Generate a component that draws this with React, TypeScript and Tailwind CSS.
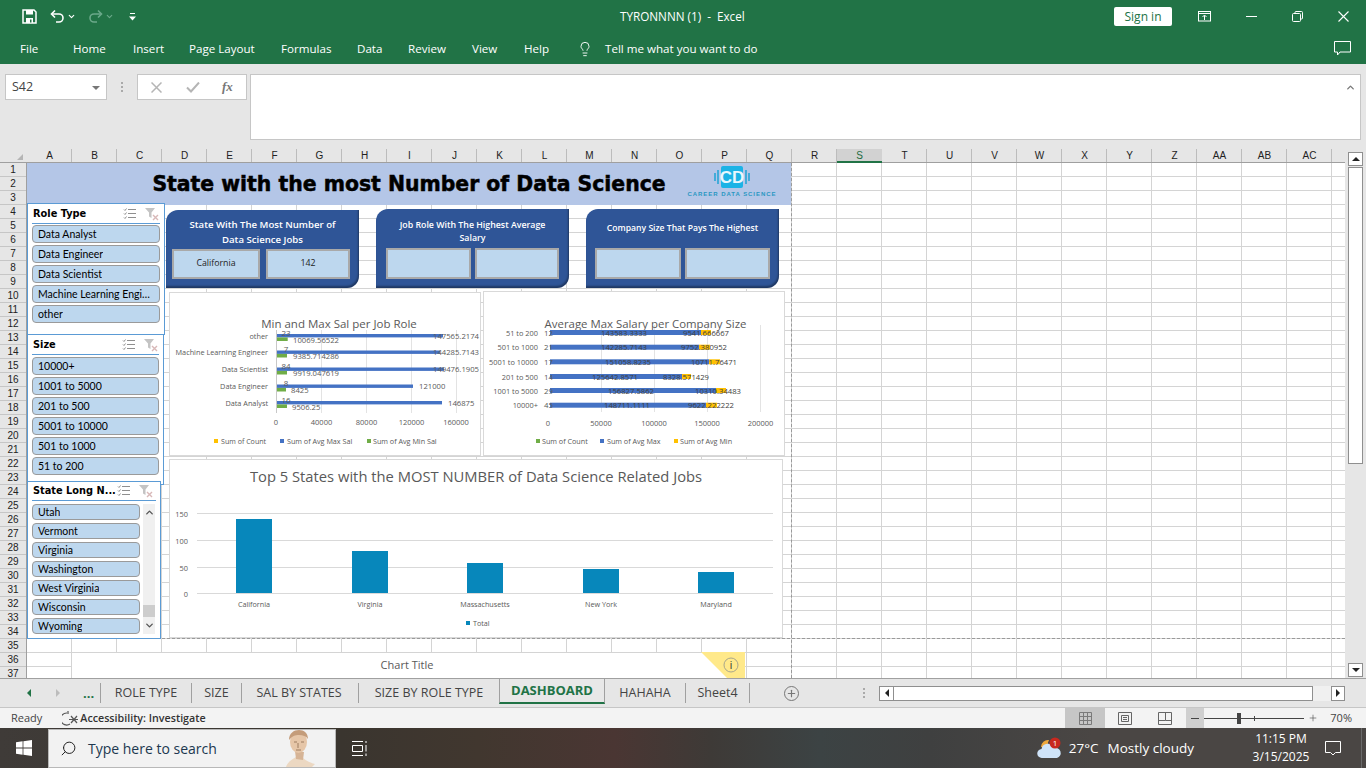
import type { ReactNode } from 'react';
import { ChevronDown, ChevronUp, Lightbulb, Plus, Search } from 'lucide-react';

const COLS = ['A','B','C','D','E','F','G','H','I','J','K','L','M','N','O','P','Q','R','S','T','U','V','W','X','Y','Z','AA','AB','AC'];
const ROWS = Array.from({ length: 37 }, (_, i) => i + 1);
const TABS = [
  { name: 'File', w: 'w-[53px]' },
  { name: 'Home', w: 'w-[60px]' },
  { name: 'Insert', w: 'w-[56px]' },
  { name: 'Page Layout', w: 'w-[92px]' },
  { name: 'Formulas', w: 'w-[76px]' },
  { name: 'Data', w: 'w-[51px]' },
  { name: 'Review', w: 'w-[64px]' },
  { name: 'View', w: 'w-[52px]' },
  { name: 'Help', w: 'w-[52px]' },
];

function Label({ x, y, a = 'start', s = 8, c = '#595959', children }: { x: number; y: number; a?: 'start' | 'middle' | 'end'; s?: number; c?: string; children: ReactNode }) {
  return (
    <text x={x} y={y} textAnchor={a} dominantBaseline="central" fontSize={s} fill={c}>
      {children}
    </text>
  );
}

function RoleChart() {
  const groups = [
    { name: 'other', y: 334, count: '23', max: 166, min: 10.7, maxL: '147565.2174', minL: '10069.56522', maxX: 433, minX: 293 },
    { name: 'Machine Learning Engineer', y: 350.5, count: '7', max: 163, min: 10, maxL: '144285.7143', minL: '9385.714286', maxX: 433, minX: 293 },
    { name: 'Data Scientist', y: 367.5, count: '84', max: 167, min: 10, maxL: '149476.1905', minL: '9919.047619', maxX: 433, minX: 293 },
    { name: 'Data Engineer', y: 384.5, count: '8', max: 136, min: 9, maxL: '121000', minL: '8425', maxX: 419, minX: 291 },
    { name: 'Data Analyst', y: 401, count: '16', max: 165, min: 10, maxL: '146875', minL: '9506.25', maxX: 448, minX: 292 },
  ];
  return (
    <svg viewBox="170 293 310 162" className="h-full w-full">
      {[321.5, 366.5, 411.5, 456.5].map((x) => (
        <line key={x} x1={x} x2={x} y1={330} y2={413} stroke="#e3e3e3" />
      ))}
      <line x1={276.5} x2={276.5} y1={330} y2={413} stroke="#c8c8c8" />
      <Label x={339} y={323} a="middle" s={11.5}>Min and Max Sal per Job Role</Label>
      {groups.map((g) => (
        <g key={g.name}>
          <rect x={277} y={g.y} width={g.max} height={3.4} fill="#4472c4" />
          <rect x={277} y={g.y + 3.4} width={g.min} height={3.6} fill="#70ad47" />
          <Label x={268} y={g.y + 1.5} a="end" s={7.3}>{g.name}</Label>
          <Label x={286} y={g.y - 2} a="middle" s={8}>{g.count}</Label>
          <Label x={g.maxX} y={g.y + 1.5} s={7.7}>{g.maxL}</Label>
          <Label x={g.minX} y={g.y + 5.5} s={7.7}>{g.minL}</Label>
        </g>
      ))}
      {[['0', 276], ['40000', 321.5], ['80000', 366.5], ['120000', 411.5], ['160000', 456]].map(([t, x]) => (
        <Label key={t} x={x as number} y={422} a="middle" s={7.5}>{t}</Label>
      ))}
      <rect x={214} y={439} width={4} height={4} fill="#ffc000" />
      <Label x={221} y={441} s={7.1}>Sum of Count</Label>
      <rect x={280} y={439} width={4} height={4} fill="#4472c4" />
      <Label x={287} y={441} s={7.2}>Sum of Avg Max Sal</Label>
      <rect x={367} y={439} width={4} height={4} fill="#70ad47" />
      <Label x={373} y={441} s={7.2}>Sum of Avg Min Sal</Label>
    </svg>
  );
}

function SizeChart() {
  const groups = [
    { name: '51 to 200', y: 330, count: '12', blue: 701, orange: 711, maxL: '143583.3333', maxX: 624, minL: '9541.666667', minX: 706 },
    { name: '501 to 1000', y: 344.7, count: '21', blue: 699, orange: 710, maxL: '142285.7143', maxX: 624, minL: '9752.380952', minX: 704 },
    { name: '5001 to 10000', y: 359.3, count: '17', blue: 709, orange: 720, maxL: '151058.8235', maxX: 628, minL: '10711.76471', minX: 714 },
    { name: '201 to 500', y: 374, count: '14', blue: 682, orange: 691, maxL: '125642.8571', maxX: 615, minL: '8328.571429', minX: 686 },
    { name: '1001 to 5000', y: 388, count: '29', blue: 716, orange: 726, maxL: '156827.5862', maxX: 631, minL: '10310.34483', minX: 718 },
    { name: '10000+', y: 402.7, count: '45', blue: 706, orange: 717, maxL: '148711.1111', maxX: 627, minL: '9622.222222', minX: 711 },
  ];
  return (
    <svg viewBox="484 292 300 163" className="h-full w-full">
      {[601.5, 654.5, 707.5, 760.5].map((x) => (
        <line key={x} x1={x} x2={x} y1={325} y2={412} stroke="#e3e3e3" />
      ))}
      <Label x={645.5} y={323.5} a="middle" s={11.4}>Average Max Salary per Company Size</Label>
      {groups.map((g) => (
        <g key={g.name}>
          <rect x={550} y={g.y} width={g.blue - 550} height={5} fill="#4472c4" />
          <rect x={g.blue} y={g.y} width={g.orange - g.blue} height={5} fill="#ffc000" />
          <Label x={538} y={g.y + 2.5} a="end" s={7.4}>{g.name}</Label>
          <Label x={544} y={g.y + 2.5} s={7.8}>{g.count}</Label>
          <Label x={g.maxX} y={g.y + 2.5} a="middle" s={7.7} c="#404040">{g.maxL}</Label>
          <Label x={g.minX} y={g.y + 2.5} a="middle" s={7.7} c="#404040">{g.minL}</Label>
        </g>
      ))}
      {[['0', 548], ['50000', 601], ['100000', 654], ['150000', 707], ['200000', 760.5]].map(([t, x]) => (
        <Label key={t} x={x as number} y={423} a="middle" s={7.5}>{t}</Label>
      ))}
      <rect x={536} y={439} width={4} height={4} fill="#70ad47" />
      <Label x={542} y={441} s={7.2}>Sum of Count</Label>
      <rect x={600} y={439} width={4} height={4} fill="#4472c4" />
      <Label x={607} y={441} s={7.2}>Sum of Avg Max</Label>
      <rect x={674} y={439} width={4} height={4} fill="#ffc000" />
      <Label x={680} y={441} s={7.2}>Sum of Avg Min</Label>
    </svg>
  );
}

function StatesChart() {
  const bars = [
    { name: 'California', x: 236, top: 519 },
    { name: 'Virginia', x: 352, top: 551 },
    { name: 'Massachusetts', x: 467, top: 563 },
    { name: 'New York', x: 583, top: 569 },
    { name: 'Maryland', x: 698, top: 572 },
  ];
  return (
    <svg viewBox="170 460 612 177" className="h-full w-full">
      {[[513.5, '150'], [540.5, '100'], [567.5, '50'], [593.5, '0']].map(([y, t]) => (
        <g key={t}>
          <line x1={197} x2={773} y1={y} y2={y} stroke="#d9d9d9" />
          <Label x={188} y={y as number} a="end" s={7.4}>{t}</Label>
        </g>
      ))}
      <Label x={476} y={476} a="middle" s={14.75}>Top 5 States with the MOST NUMBER of Data Science Related Jobs</Label>
      {bars.map((b) => (
        <g key={b.name}>
          <rect x={b.x} y={b.top} width={36} height={593 - b.top} fill="#0787bb" />
          <Label x={b.x + 18} y={604} a="middle" s={7.2}>{b.name}</Label>
        </g>
      ))}
      <rect x={466} y={621} width={4} height={4} fill="#0787bb" />
      <Label x={473} y={623} s={7.2}>Total</Label>
    </svg>
  );
}

function SlicerIcons() {
  return (
    <div className="flex items-center gap-[9px]">
      <svg width="13" height="12" viewBox="0 0 13 12" fill="none" stroke="#8f8f8f">
        <path d="M5 1.5h8M5 5.5h8M5 9.5h8" />
        <path d="M1 1.5l1 1 1.5-2M1 5.5l1 1 1.5-2M1 9.5l1 1 1.5-2" />
      </svg>
      <svg width="14" height="14" viewBox="0 0 14 14">
        <path d="M0 1h10L6.5 5.5V11L4 9.5V5.5z" fill="#c4c4c4" />
        <path d="M8 8l5 5M13 8l-5 5" stroke="#d8b8b8" strokeWidth="1.4" />
      </svg>
    </div>
  );
}

function SlicerBtn({ children, small }: { children: ReactNode; small?: boolean }) {
  return (
    <div className={`flex items-center rounded-[4px] border border-[#9a9a9a] bg-[#bdd7ee] pl-[5px] pr-[6px] pt-px text-[10.5px] text-black ${small ? 'h-[16px]' : 'h-[18px]'}`}>
      <span className="truncate">{children}</span>
    </div>
  );
}

function SlicerTitle({ children }: { children: ReactNode }) {
  return <span className="whitespace-nowrap font-['DejaVu_Sans',sans-serif] text-[9.8px] font-bold text-black">{children}</span>;
}

function Slicer({ title, items, className, listClass }: { title: string; items: string[]; className: string; listClass: string }) {
  return (
    <div className={`absolute flex flex-col border border-[#5b9bd5] bg-white px-[4px] font-['Lato',sans-serif] ${className}`}>
      <div className="flex h-[20px] shrink-0 items-center justify-between border-b border-[#5b9bd5] pl-px pr-[1px] pt-[1px]">
        <SlicerTitle>{title}</SlicerTitle>
        <SlicerIcons />
      </div>
      <div className={`flex flex-col gap-[2px] ${listClass}`}>
        {items.map((i) => (
          <SlicerBtn key={i}>{i}</SlicerBtn>
        ))}
      </div>
    </div>
  );
}

function StateSlicer() {
  const items = ['Utah', 'Vermont', 'Virginia', 'Washington', 'West Virginia', 'Wisconsin', 'Wyoming'];
  return (
    <div className="absolute left-[0px] top-[318px] flex h-[158px] w-[134px] flex-col overflow-hidden border border-[#5b9bd5] bg-white px-[4px] font-['Lato',sans-serif]">
      <div className="flex h-[19px] shrink-0 items-center justify-between border-b border-[#5b9bd5] pl-px pr-[3px]">
        <SlicerTitle>State Long N...</SlicerTitle>
        <SlicerIcons />
      </div>
      <div className="mt-[3px] flex gap-[3px]">
        <div className="flex w-[108px] flex-col gap-[3px]">
          {items.map((i) => (
            <SlicerBtn key={i} small>{i}</SlicerBtn>
          ))}
        </div>
        <div className="flex h-[130px] w-[12px] flex-col items-center justify-between bg-[#f0f0f0]">
          <ChevronUp size={11} strokeWidth={3} className="mt-[3px] text-[#555]" />
          <div className="mt-auto h-[12px] w-full bg-[#cdcdcd]" />
          <ChevronDown size={11} strokeWidth={3} className="my-[3px] text-[#555]" />
        </div>
      </div>
    </div>
  );
}

function InfoCard({ className, titleClass, title, boxes }: { className: string; titleClass: string; title: ReactNode; boxes: { text?: string; w: string }[] }) {
  return (
    <div className={`absolute flex w-[193px] flex-col rounded-tl-[12px] rounded-br-[12px] bg-[#2f5597] pb-[9px] shadow-[inset_-1px_-2px_2px_rgba(0,0,0,0.35)] ${className}`}>
      <div className={`-mx-[6px] flex h-[39px] flex-col items-center justify-center text-center font-semibold text-white ${titleClass}`}>
        {title}
      </div>
      <div className="flex flex-1">
        {boxes.map((b, i) => (
          <div key={i} className={`flex items-center justify-center border-2 border-[#a9a9a9] bg-[#bdd7ee] text-[8.8px] font-medium text-[#222] ${b.w}`}>
            {b.text}
          </div>
        ))}
      </div>
    </div>
  );
}

function Logo() {
  return (
    <div className="absolute left-[660px] top-[2px] flex w-[90px] flex-col items-center font-['Liberation_Sans',sans-serif]">
      <svg width="36" height="24" viewBox="0 0 36 24">
        <rect x="7" y="1" width="22" height="22" rx="2" fill="#1bb3e6" />
        <path d="M1 8v8M4 5v14M32 5v14M35 8v8" stroke="#27a5d6" strokeWidth="1.6" />
        <text x="18" y="18" textAnchor="middle" fontSize="17" fontWeight="700" fill="#e8f7fd">CD</text>
      </svg>
      <span className="mt-[1px] whitespace-nowrap text-[6px] font-bold tracking-[0.95px] text-[#2a97c2]">CAREER DATA SCIENCE</span>
    </div>
  );
}

function Canvas() {
  return (
    <div className="relative h-[515px] flex-1 overflow-hidden bg-white bg-[linear-gradient(to_right,transparent_44px,#d4d4d4_44px),linear-gradient(to_bottom,transparent_13px,#d4d4d4_13px)] bg-[size:45px_14px]">
      {/* page break lines */}
      <div className="absolute left-[764px] top-0 h-full border-l border-dashed border-[#9a9a9a]" />
      <div className="absolute left-0 top-[475px] w-full border-t border-dashed border-[#9a9a9a]" />

      <div className="absolute left-0 top-0 flex h-[42px] w-[764px] items-center justify-center bg-[#b4c6e7] pt-px">
        <span className="whitespace-nowrap font-['DejaVu_Sans',sans-serif] text-[20.4px] font-bold text-black [-webkit-text-stroke:0.5px_black]">State with the most Number of Data Science</span>
        <Logo />
      </div>

      <Slicer title="Role Type" items={['Data Analyst', 'Data Engineer', 'Data Scientist', 'Machine Learning Engineer', 'other']} listClass="mt-[1px]" className="left-0 top-[40px] h-[132px] w-[138px]" />
      <Slicer title="Size" items={['10000+', '1001 to 5000', '201 to 500', '5001 to 10000', '501 to 1000', '51 to 200']} listClass="mt-[2px]" className="left-0 top-[171px] h-[151px] w-[137px]" />
      <StateSlicer />

      <InfoCard
        className="left-[139px] top-[47px] h-[78px] px-[6px]"
        titleClass="pt-[5px] text-[9.6px] leading-[15px]"
        title={<><span>State With The Most Number of</span><span>Data Science Jobs</span></>}
        boxes={[{ text: 'California', w: 'w-[88px]' }, { text: '142', w: 'ml-[6px] w-[84px]' }]}
      />
      <InfoCard
        className="left-[349px] top-[46px] h-[79px] px-[10px]"
        titleClass="pt-[6px] text-[8.8px] leading-[13px]"
        title={<><span>Job Role With The Highest Average</span><span>Salary</span></>}
        boxes={[{ w: 'w-[85px]' }, { w: 'ml-[4px] w-[85px]' }]}
      />
      <InfoCard
        className="left-[559px] top-[46px] h-[79px] px-[9px]"
        titleClass="text-[8.6px] leading-[13px]"
        title="Company Size That Pays The Highest"
        boxes={[{ w: 'w-[86px]' }, { w: 'ml-[4px] w-[86px]' }]}
      />

      <div className="absolute left-[142px] top-[129px] h-[164px] w-[312px] border border-[#d9d9d9] bg-white"><RoleChart /></div>
      <div className="absolute left-[456px] top-[128px] h-[165px] w-[302px] border border-[#d9d9d9] bg-white"><SizeChart /></div>
      <div className="absolute left-[142px] top-[296px] h-[179px] w-[614px] border border-[#d9d9d9] bg-white"><StatesChart /></div>

      {/* chart peeking out under the print area */}
      <div className="absolute left-[45px] top-[489px] flex h-[30px] w-[672px] justify-center border-t border-[#d4d4d4] bg-white pr-[2px] pt-[4px] text-[11px] text-[#595959]">
        Chart Title
      </div>
      <svg className="absolute left-[674px] top-[489px]" width="45" height="26" viewBox="0 0 45 26">
        <path d="M0 0H44V26H26z" fill="#ffe98a" />
        <circle cx="30" cy="13" r="7" fill="#ffe98a" stroke="#a8a68c" />
        <text x="30" y="16.5" textAnchor="middle" fontSize="10" fill="#222">i</text>
      </svg>
    </div>
  );
}

function TitleBar() {
  return (
    <div className="relative flex h-[32px] items-center pt-px text-white">
      <svg className="ml-[22px]" width="15" height="15" viewBox="0 0 15 15" fill="none">
        <path d="M1 1h11l2 2v11H1z" stroke="white" strokeWidth="1.5" />
        <rect x="4" y="1" width="7" height="4.5" fill="white" />
        <rect x="4" y="9" width="7" height="5" fill="white" />
        <rect x="8" y="10.5" width="1.5" height="3" fill="#217346" />
      </svg>
      <svg className="ml-[13px]" width="15" height="15" viewBox="0 0 15 15" fill="none" stroke="white" strokeWidth="1.6">
        <path d="M5 1.5L1.5 5 5 8.5" />
        <path d="M2 5h7a4 4 0 0 1 0 8H6" />
      </svg>
      <ChevronDown size={9} strokeWidth={3} className="ml-[2px]" />
      <svg className="ml-[12px]" width="15" height="15" viewBox="0 0 15 15" fill="none" stroke="#6ba98a" strokeWidth="1.6">
        <path d="M10 1.5L13.5 5 10 8.5" />
        <path d="M13 5H6a4 4 0 0 0 0 8h3" />
      </svg>
      <ChevronDown size={9} strokeWidth={3} className="ml-[2px] text-[#6ba98a]" />
      <svg className="ml-[15px]" width="7" height="8" viewBox="0 0 7 8" fill="white">
        <rect x="1" y="0" width="5" height="1" />
        <path d="M0 3.5h7L3.5 7.5z" />
      </svg>
      <span className="absolute left-[620px] top-[8px] text-[11.7px]">TYRONNNN (1)&nbsp; -&nbsp; Excel</span>
      <div className="ml-auto flex items-center">
        <div className="flex h-[19px] w-[58px] items-center justify-center rounded-[2px] bg-white text-[12px] text-[#217346]">Sign in</div>
        <svg className="ml-[26px]" width="14" height="11" viewBox="0 0 14 11" fill="none" stroke="white">
          <rect x="0.5" y="0.5" width="12" height="9.5" />
          <path d="M0.5 2.5h12M6.5 9V4.5M4.5 6l2-2 2 2" />
        </svg>
        <div className="ml-[34px] h-px w-[11px] bg-white" />
        <svg className="ml-[35px]" width="11" height="11" viewBox="0 0 11 11" fill="none" stroke="white">
          <rect x="0.5" y="2.5" width="8" height="8" rx="1" />
          <path d="M3 2.5V1.5a1 1 0 0 1 1-1h5.5a1 1 0 0 1 1 1V7a1 1 0 0 1-1 1h-1" />
        </svg>
        <svg className="ml-[35px] mr-[17px]" width="11" height="11" viewBox="0 0 11 11" stroke="white" strokeWidth="1.1">
          <path d="M0.5 0.5l10 10M10.5 0.5l-10 10" />
        </svg>
      </div>
    </div>
  );
}

function RibbonTabs() {
  return (
    <div className="flex h-[32px] items-center pl-[20px] pt-px text-[11.6px] text-white">
      {TABS.map((t) => (
        <span key={t.name} className={t.w}>{t.name}</span>
      ))}
      <Lightbulb size={16} strokeWidth={1.4} className="ml-[1px]" />
      <span className="ml-[12px]">Tell me what you want to do</span>
      <svg className="ml-auto mr-[15px]" width="17" height="15" viewBox="0 0 17 15" fill="none" stroke="white">
        <path d="M0.5 0.5h16v10.5H6l-2.5 3V11H0.5z" />
      </svg>
    </div>
  );
}

function FormulaBar() {
  return (
    <div className="flex h-[85px] items-start bg-[#e6e6e6] pl-[5px] pr-[5px] pt-[10px]">
      <div className="flex h-[26px] w-[102px] items-center justify-between border border-[#c6c6c6] bg-white pl-[6px] pr-[6px] pt-px text-[12.5px] text-[#444]">
        S42
        <svg width="8" height="4" viewBox="0 0 8 4"><path d="M0 0h8L4 4z" fill="#777" /></svg>
      </div>
      <div className="ml-[14px] mt-[8px] flex flex-col gap-[2px]">
        <i className="h-[2px] w-[2px] bg-[#aaa]" />
        <i className="h-[2px] w-[2px] bg-[#aaa]" />
        <i className="h-[2px] w-[2px] bg-[#aaa]" />
      </div>
      <div className="ml-[14px] flex h-[26px] w-[110px] items-center border border-[#c6c6c6] bg-white">
        <svg className="ml-[13px]" width="11" height="11" viewBox="0 0 11 11" stroke="#b5b5b5" strokeWidth="1.5"><path d="M0.5 0.5l10 10M10.5 0.5l-10 10" /></svg>
        <svg className="ml-[24px]" width="14" height="11" viewBox="0 0 14 11" fill="none" stroke="#b5b5b5" strokeWidth="2"><path d="M1 5.5l4 4 8-9" /></svg>
        <span className="ml-[22px] font-['Liberation_Serif',serif] text-[13px] font-bold italic text-[#777]">fx</span>
      </div>
      <div className="ml-[3px] flex h-[66px] flex-1 items-start justify-end border border-[#c6c6c6] bg-white pr-[4px] pt-[7px]">
        <ChevronUp size={11} strokeWidth={3} className="text-[#777]" />
      </div>
    </div>
  );
}

function ColumnHeader() {
  return (
    <div className="flex h-[14px] border-b border-[#9f9f9f] bg-[#e6e6e6] font-['Liberation_Sans',sans-serif] text-[10px] leading-[13px] text-[#222]">
      <div className="relative w-[27px] shrink-0">
        <svg className="absolute left-[17px] top-[5px]" width="6" height="6" viewBox="0 0 6 6"><path d="M6 0v6H0z" fill="#b5b5b5" /></svg>
      </div>
      {COLS.map((c) => (
        <div
          key={c}
          className={
            c === 'S'
              ? 'relative -mb-px w-[45px] shrink-0 border-b-2 border-[#217346] bg-[#d2d2d2] text-center text-[#1e6b41]'
              : 'w-[45px] shrink-0 border-r border-[#bcbcbc] pl-px text-center'
          }
        >
          {c}
        </div>
      ))}
    </div>
  );
}

function RowHeader() {
  return (
    <div className="h-[515px] w-[27px] shrink-0 overflow-hidden border-r border-[#9f9f9f] bg-[#e6e6e6] font-['Liberation_Sans',sans-serif] text-[10px] text-[#222]">
      {ROWS.map((r) => (
        <div key={r} className="flex h-[14px] items-center justify-center border-b border-[#c6c6c6]">{r}</div>
      ))}
    </div>
  );
}

function VScroll() {
  return (
    <div className="flex h-[529px] w-[21px] shrink-0 flex-col bg-[#e6e6e6] pl-[3px] pr-[3px] pt-[3px]">
      <div className="flex h-[14px] items-center justify-center border border-[#8f8f8f] bg-white">
        <svg width="8" height="4" viewBox="0 0 8 4"><path d="M0 4h8L4 0z" fill="#222" /></svg>
      </div>
      <div className="mt-px h-[297px] border border-[#8f8f8f] bg-white" />
      <div className="mt-auto mb-[1px] flex h-[14px] items-center justify-center border border-[#8f8f8f] bg-white">
        <svg width="8" height="4" viewBox="0 0 8 4"><path d="M0 0h8L4 4z" fill="#222" /></svg>
      </div>
    </div>
  );
}

function SheetTab({ name, w }: { name: string; w: string }) {
  return (
    <div className={`flex h-[20px] items-center justify-center border-r border-[#a0a0a0] ${w}`}>{name}</div>
  );
}

function SheetTabs() {
  return (
    <div className="flex h-[29px] items-center border-t border-[#a0a0a0] bg-[#e6e6e6] text-[12.5px] text-[#444]">
      <div className="flex h-[20px] w-[101px] items-center border-r border-[#a0a0a0]">
        <svg className="ml-[27px]" width="4" height="8" viewBox="0 0 4 8"><path d="M4 0v8L0 4z" fill="#217346" /></svg>
        <svg className="ml-[25px]" width="4" height="8" viewBox="0 0 4 8"><path d="M0 0v8l4-4z" fill="#bcbcbc" /></svg>
        <span className="ml-[23px] text-[13px] font-bold leading-[8px] text-[#217346]">...</span>
      </div>
      <SheetTab name="ROLE TYPE" w="w-[91px]" />
      <SheetTab name="SIZE" w="w-[50px]" />
      <div className="flex h-[20px] w-[117px] items-center justify-center border-r border-[#a0a0a0] pr-[2px]">SAL BY STATES</div>
      <div className="flex h-[20px] w-[140px] items-center justify-center">SIZE BY ROLE TYPE</div>
      <div className="flex h-[25px] w-[106px] items-center justify-center self-start border-x border-b-2 border-x-[#a0a0a0] border-b-[#217346] bg-[#e8e8e8] text-[13px] font-bold text-[#217346]">DASHBOARD</div>
      <SheetTab name="HAHAHA" w="w-[81px]" />
      <SheetTab name="Sheet4" w="w-[64px]" />
      <div className="ml-[34px] flex h-[15px] w-[15px] items-center justify-center rounded-full border border-[#777]">
        <Plus size={11} strokeWidth={2.5} className="text-[#777]" />
      </div>
      <div className="ml-[64px] flex flex-col gap-[2px]">
        <i className="h-[2px] w-[2px] bg-[#aaa]" />
        <i className="h-[2px] w-[2px] bg-[#aaa]" />
        <i className="h-[2px] w-[2px] bg-[#aaa]" />
      </div>
      <div className="ml-[14px] flex h-[15px] w-[15px] items-center justify-center border border-[#8f8f8f] bg-white">
        <svg width="4" height="8" viewBox="0 0 4 8"><path d="M4 0v8L0 4z" fill="#222" /></svg>
      </div>
      <div className="h-[15px] w-[419px] border border-l-0 border-[#8f8f8f] bg-white" />
      <div className="h-[15px] w-[18px] bg-[#f0f0f0]" />
      <div className="flex h-[15px] w-[14px] items-center justify-center border border-[#8f8f8f] bg-white">
        <svg width="4" height="8" viewBox="0 0 4 8"><path d="M0 0v8l4-4z" fill="#222" /></svg>
      </div>
    </div>
  );
}

function StatusBar() {
  return (
    <div className="flex h-[21px] items-center border-t border-[#c6c6c6] bg-[#f3f3f3] text-[11px] text-[#444]">
      <span className="ml-[11px]">Ready</span>
      <svg className="ml-[20px]" width="17" height="15" viewBox="0 0 17 15" fill="none" stroke="#555" strokeWidth="1.2">
        <path d="M5 2a6 6 0 1 0 3 11" />
        <path d="M6 0v3M9 5l6 7M15 5l-6 7M7 8.500h9" />
      </svg>
      <span className="ml-[1px] text-[10.7px] font-semibold text-[#333]">Accessibility: Investigate</span>
      <div className="ml-auto flex h-full items-center">
        <div className="flex h-full w-[40px] items-center justify-center bg-[#c6c6c6]">
          <svg width="13" height="13" viewBox="0 0 13 13" fill="none" stroke="#7a7a7a">
            <path d="M0.5 0.5h12v12h-12zM4.5 0.5v12M8.5 0.5v12M0.5 4.5h12M0.5 8.5h12" />
          </svg>
        </div>
        <div className="flex h-full w-[40px] items-center justify-center">
          <svg width="14" height="13" viewBox="0 0 14 13" fill="none" stroke="#666">
            <path d="M0.5 0.5h13v12h-13zM3.5 3.5h7v6h-7zM5 5.5h4M5 7.5h4" />
          </svg>
        </div>
        <div className="flex h-full w-[40px] items-center justify-center">
          <svg width="14" height="13" viewBox="0 0 14 13" fill="none" stroke="#666">
            <path d="M0.5 0.5h13v12h-13zM0.5 8.5h7V0.5M7.5 8.5h6" />
          </svg>
        </div>
        <div className="ml-px flex h-full w-[18px] items-center justify-center bg-[#cfcfcf]">
          <div className="h-px w-[8px] bg-[#444]" />
        </div>
        <div className="relative h-px w-[100px] bg-[#444]">
          <div className="absolute left-[33px] top-[-5px] h-[11px] w-[4px] bg-[#444]" />
          <div className="absolute left-[50px] top-[-2px] h-[5px] w-px bg-[#444]" />
        </div>
        <Plus size={10} strokeWidth={1.4} className="ml-[4px] text-[#444]" />
        <span className="ml-[12px] mr-[14px]">70%</span>
      </div>
    </div>
  );
}

function Taskbar() {
  return (
    <div className="flex h-[40px] items-center bg-[linear-gradient(to_right,#3f3b38_0%,#3a352f_25%,#41372f_35%,#4a3633_45%,#3e3a37_52%,#3c4344_60%,#3f4040_68%,#4a4644_80%,#4a4644_100%)] text-white">
      <div className="flex h-full w-[48px] items-center justify-center">
        <svg width="16" height="16" viewBox="0 0 16 16" fill="white">
          <path d="M0 2.2l6.6-.9v6.3H0zM7.4 1.2L16 0v7.6H7.4zM0 8.4h6.6v6.3L0 13.8zM7.4 8.4H16V16l-8.6-1.2z" />
        </svg>
      </div>
      <div className="relative flex h-[39px] w-[288px] items-center self-end border border-[#b8b8b8] bg-[#f2f2f2] pl-[11px] text-[14px] text-[#20384f]">
        <Search size={17} strokeWidth={1.4} className="-scale-x-100 text-[#222]" />
        <span className="ml-[11px]">Type here to search</span>
        <svg className="absolute bottom-0 left-[234px]" width="32" height="38" viewBox="0 0 32 38">
          <path d="M3 38c2-6 7-8 10-10l7 1c3 3 8 5 12 6l-3 3z" fill="#ecd8c2" />
          <path d="M12 22l1 8 7 1 1-8z" fill="#d6b496" />
          <ellipse cx="15.500" cy="13" rx="8.500" ry="11" fill="#e6c6a8" />
          <path d="M6 11C6 4 11 1 16 1s9 3 9 9c-2-3-5-4-9-4s-7 1-10 5z" fill="#c49c7a" />
          <path d="M11 13h3M18 13h3M15 14v5M13 21h5" stroke="#8c6a4e" strokeWidth="0.8" />
        </svg>
      </div>
      <svg className="ml-[16px]" width="16" height="15" viewBox="0 0 16 15" fill="none" stroke="white">
        <path d="M0 0.500h11M0 14.500h11M0.500 4.500h10v6h-10zM14 0v2M14 4v6.500M14 12.500V15" />
      </svg>
      <div className="ml-auto flex items-center">
        <svg width="26" height="24" viewBox="0 0 26 24">
          <path d="M4 11a7 7 0 0 1 8-7 6 6 0 0 0 3 9z" fill="#f0a83c" />
          <path d="M5 22a4.500 4.500 0 0 1-.5-9 6.500 6.500 0 0 1 12.500-1 5 5 0 0 1 3 10z" fill="#cfe3f8" />
          <circle cx="18" cy="7" r="5.500" fill="#c8281e" />
          <text x="18" y="10" textAnchor="middle" fontSize="8" fill="white">1</text>
        </svg>
        <span className="ml-[6px] text-[13.5px]">27°C</span>
        <span className="ml-[9px] text-[13.5px]">Mostly cloudy</span>
        <div className="ml-[57px] flex w-[60px] flex-col items-center text-[12px] leading-[18px]">
          <span>11:15 PM</span>
          <span>3/15/2025</span>
        </div>
        <svg className="ml-[14px] mr-[20px]" width="16" height="15" viewBox="0 0 16 15" fill="none" stroke="white">
          <path d="M0.500 0.500h15v11h-5l-2.500 2.500-2.500-2.500h-5z" />
        </svg>
        <div className="mr-[4px] h-[40px] w-px bg-[#6a6a6a]" />
      </div>
    </div>
  );
}

export default function App() {
  return (
    <div className="h-[768px] w-[1366px] overflow-hidden bg-[#e6e6e6] font-['Open_Sans',sans-serif]">
      <div className="bg-[#217346]">
        <TitleBar />
        <RibbonTabs />
      </div>
      <FormulaBar />
      <div className="flex">
        <div className="w-[1345px]">
          <ColumnHeader />
          <div className="flex">
            <RowHeader />
            <Canvas />
          </div>
        </div>
        <VScroll />
      </div>
      <SheetTabs />
      <StatusBar />
      <Taskbar />
    </div>
  );
}
